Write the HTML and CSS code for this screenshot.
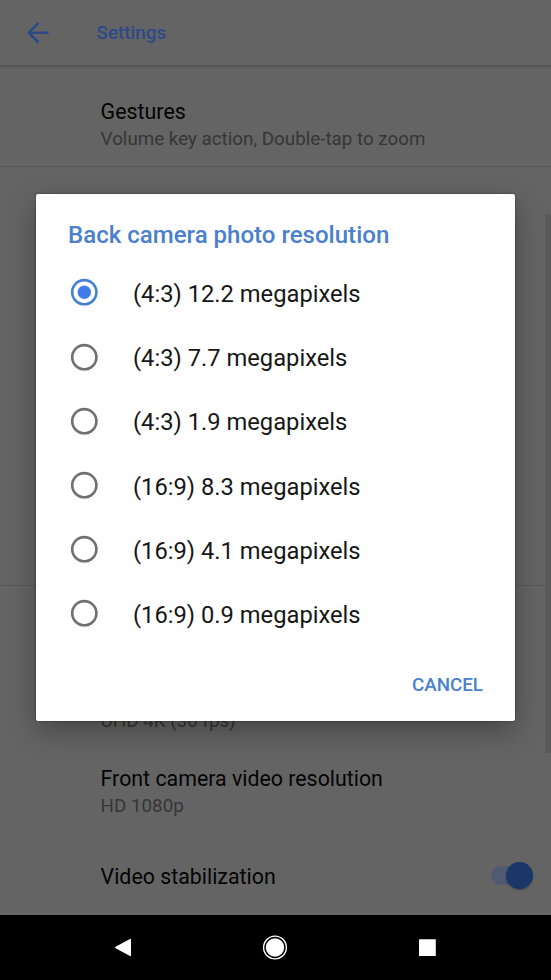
FILE: index.html
```html
<!DOCTYPE html>
<html lang="en">
<head>
<meta charset="utf-8">
<meta name="viewport" content="width=device-width, initial-scale=1">
<title>Settings</title>
<link rel="stylesheet" href="styles.css">
</head>
<body>
<div class="screen">
  <header class="app-bar">
    <svg class="back" width="24" height="24" viewBox="0 0 24 24" fill="none" stroke="currentColor" stroke-width="2.5"><path d="M22.5 11.7H3M12.5 1.9 2.8 11.7l9.7 9.8"/></svg>
    <h1 class="app-title">Settings</h1>
  </header>
  <main class="content">
    <section class="group group-general">
      <div class="label">Gestures</div>
      <div class="summary">Volume key action, Double-tap to zoom</div>
    </section>
    <section class="group group-photo"></section>
    <section class="group group-video">
      <div class="summary">UHD 4K (30 fps)</div>
      <div class="row">
        <div class="label">Front camera video resolution</div>
        <div class="summary">HD 1080p</div>
      </div>
      <div class="row row-switch">
        <div class="label">Video stabilization</div>
        <div class="switch"><span class="thumb"></span></div>
      </div>
    </section>
    <div class="scrollbar"></div>
  </main>
  <nav class="nav-bar">
    <svg width="20" height="26" viewBox="0 0 20 26"><path d="M19 4.4v16.2q0 1-1 .5L3.6 13.3q-1.2-.8 0-1.6L18 3.9q1-.5 1 .5z" fill="#fff"/></svg>
    <svg width="26" height="26" viewBox="0 0 26 26"><circle cx="13" cy="12.5" r="11.4" fill="none" stroke="#fff" stroke-width="1.4"/><circle cx="13" cy="12.5" r="9.2" fill="#fff"/></svg>
    <svg width="18" height="26" viewBox="0 0 18 26"><rect x="1" y="4.2" width="16.8" height="16.8" rx=".6" fill="#fff"/></svg>
  </nav>
  <div class="dialog" role="dialog">
    <h2 class="dialog-title">Back camera photo resolution</h2>
    <ul class="options">
      <li class="option"><svg class="radio checked" viewBox="0 0 28 28"><circle class="ring" cx="14.3" cy="14.2" r="12.1"/><circle class="dot" cx="14.3" cy="14.2" r="6.7"/></svg><span>(4:3) 12.2 megapixels</span></li>
      <li class="option"><svg class="radio" viewBox="0 0 28 28"><circle class="ring" cx="14.3" cy="14.2" r="12.1"/></svg><span>(4:3) 7.7 megapixels</span></li>
      <li class="option"><svg class="radio" viewBox="0 0 28 28"><circle class="ring" cx="14.3" cy="14.2" r="12.1"/></svg><span>(4:3) 1.9 megapixels</span></li>
      <li class="option"><svg class="radio" viewBox="0 0 28 28"><circle class="ring" cx="14.3" cy="14.2" r="12.1"/></svg><span>(16:9) 8.3 megapixels</span></li>
      <li class="option"><svg class="radio" viewBox="0 0 28 28"><circle class="ring" cx="14.3" cy="14.2" r="12.1"/></svg><span>(16:9) 4.1 megapixels</span></li>
      <li class="option"><svg class="radio" viewBox="0 0 28 28"><circle class="ring" cx="14.3" cy="14.2" r="12.1"/></svg><span>(16:9) 0.9 megapixels</span></li>
    </ul>
    <div class="actions"><button class="cancel">CANCEL</button></div>
  </div>
</div>
</body>
</html>
```
FILE: styles.css
```css
* { box-sizing: border-box; }
body { margin: 0; font-family: Roboto, "Liberation Sans", sans-serif; }
h1, h2, ul { margin: 0; padding: 0; }
.screen {
  position: relative;
  display: flex;
  flex-direction: column;
  width: 551px;
  height: 980px;
  overflow: hidden;
  background: #646464;
}
.app-bar {
  display: flex;
  align-items: center;
  gap: 46.6px;
  flex: none;
  height: 66px;
  padding-left: 26px;
  color: #2c4a87;
  border-bottom: 1px solid #535353;
  box-shadow: 0 1px 3px rgba(0, 0, 0, .2);
}
.back { flex: none; }
.app-title { padding-top: 1px; font-size: 18.8px; line-height: 24px; font-weight: 500; }
.content {
  position: relative;
  flex: 1;
  display: flex;
  flex-direction: column;
}
.group { padding-left: 100.6px; }
.group-general { height: 101px; padding-top: 32px; border-bottom: 1px solid #585858; }
.group-photo { height: 419px; border-bottom: 1px solid #585858; }
.group-video { padding-top: 121px; }
.label { font-size: 21.4px; line-height: 27px; color: #040404; white-space: nowrap; }
.summary { padding-top: 1px; font-size: 18.8px; line-height: 27px; color: #363636; white-space: nowrap; }
.row { margin-top: 30px; }
.row .label { font-size: 21.35px; }
.row-switch {
  display: flex;
  align-items: center;
  justify-content: space-between;
  margin-top: 43px;
  padding-right: 18px;
}
.row-switch .switch { margin-bottom: 3px; }
.switch {
  display: flex;
  align-items: center;
  justify-content: flex-end;
  width: 42px;
  height: 19px;
  border-radius: 10px;
  background: #505b72;
}
.thumb {
  flex: none;
  width: 27px;
  height: 27px;
  border-radius: 50%;
  background: #1b3768;
  box-shadow: 0 1px 2px rgba(0, 0, 0, .3);
}
.scrollbar {
  position: absolute;
  right: 0;
  top: 148px;
  width: 6px;
  height: 539px;
  background: #595959;
}
.nav-bar {
  display: flex;
  align-items: center;
  justify-content: space-between;
  flex: none;
  height: 65px;
  padding: 0 115px 0 112px;
  background: #000;
}
.dialog {
  position: absolute;
  left: 36px;
  top: 194px;
  width: 479px;
  height: 527px;
  display: flex;
  flex-direction: column;
  background: #fff;
  border-radius: 2px;
  box-shadow: 0 0 2px rgba(0, 0, 0, .5), 0 10px 28px rgba(0, 0, 0, .3);
}
.dialog-title {
  padding: 25px 0 0 32px;
  font-size: 24.05px;
  line-height: 32px;
  font-weight: 500;
  color: #4a80cc;
  white-space: nowrap;
}
.options { list-style: none; padding-top: 9.4px; }
.option {
  display: flex;
  align-items: center;
  gap: 35px;
  height: 64.2px;
  padding-left: 34px;
  font-size: 23.72px;
  color: #171717;
  white-space: nowrap;
}
.option span { padding-top: 3px; }
.radio { flex: none; width: 28px; height: 28px; }
.ring { fill: none; stroke: #707070; stroke-width: 2.6; }
.checked .ring { stroke: #4680d2; }
.dot { fill: #3f7de8; }
.actions { display: flex; justify-content: flex-end; margin-top: auto; padding: 0 32px 23px 0; }
.cancel {
  padding: 0;
  border: 0;
  background: none;
  font: 500 18.8px/26px Roboto, "Liberation Sans", sans-serif;
  color: #4a80cc;
}
```
